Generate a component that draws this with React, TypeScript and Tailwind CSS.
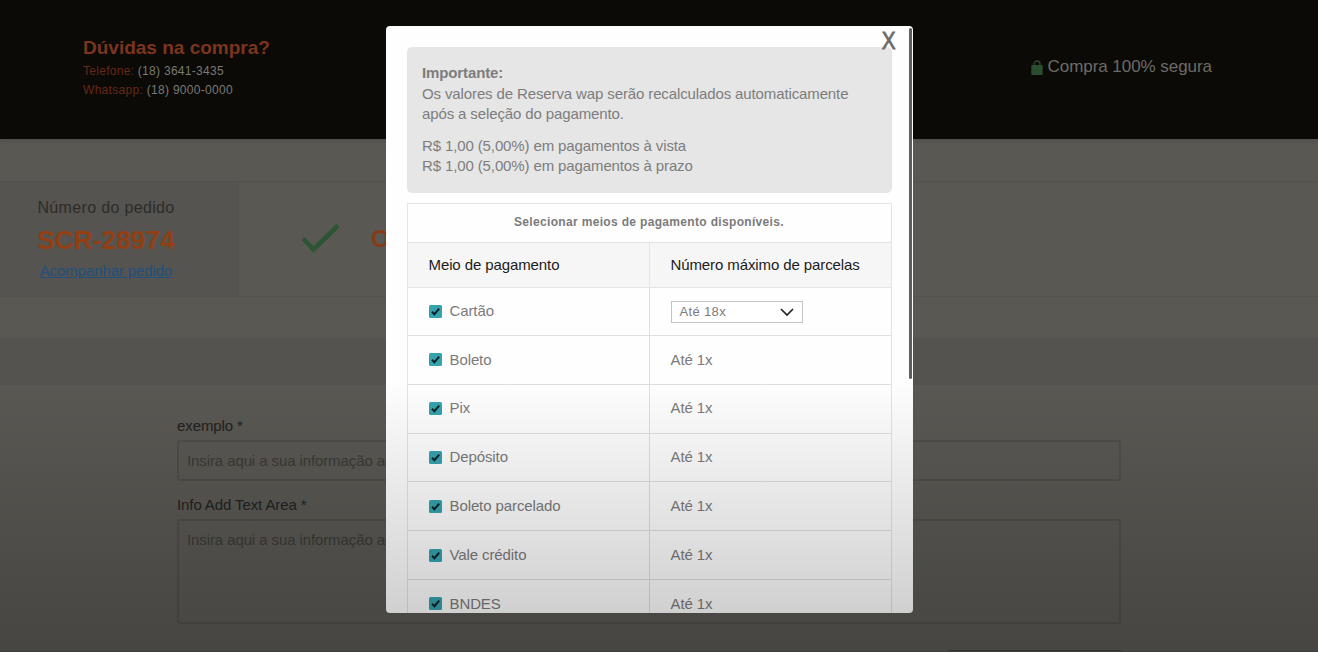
import React from 'react';

interface PaymentMethod {
  name: string;
  installments: string;
  select?: boolean;
}

const methods: PaymentMethod[] = [
  { name: 'Cartão', installments: 'Até 18x', select: true },
  { name: 'Boleto', installments: 'Até 1x' },
  { name: 'Pix', installments: 'Até 1x' },
  { name: 'Depósito', installments: 'Até 1x' },
  { name: 'Boleto parcelado', installments: 'Até 1x' },
  { name: 'Vale crédito', installments: 'Até 1x' },
  { name: 'BNDES', installments: 'Até 1x' },
];

const Header: React.FC = () => (
  <header className="flex h-[139px] shrink-0 justify-between bg-[#0b0a06] pl-[83px] pr-[106px] shadow-[0_1px_5px_rgba(0,0,0,0.15)]">
    <div className="pt-[34px]">
      <h1 className="text-[19px] leading-[27px] font-bold text-[#7c351c]">Dúvidas na compra?</h1>
      <p className="mt-px text-[12px] leading-[19px] tracking-[0.28px] text-[#7a7976]">
        <span className="text-[#632919]">Telefone:</span> (18) 3641-3435
      </p>
      <p className="text-[12px] leading-[19px] tracking-[0.3px] text-[#7a7976]">
        <span className="text-[#632919]">Whatsapp:</span> (18) 9000-0000
      </p>
    </div>
    <div className="flex h-6 items-center gap-[5px] mt-[55px] text-[17px] tracking-[-0.05px] text-[#6c6b68]">
      <svg className="h-[15px] w-[12px]" viewBox="0 0 12 15" fill="none">
        <path d="M3 6V4a3 3 0 0 1 6 0v2" stroke="#2a4d2e" strokeWidth="1.3" />
        <rect x="0.3" y="5" width="11.4" height="10" rx="1" fill="#2a4d2e" />
      </svg>
      <span>Compra 100% segura</span>
    </div>
  </header>
);

const OrderBar: React.FC = () => (
  <section className="flex h-[116px] border-y border-[#53524d] mt-[42px]">
    <div className="flex w-[239px] flex-col items-center bg-[#555450] pr-[27px] pt-[14px]">
      <span className="text-[16px] leading-6 tracking-[0.35px] text-[#2d2c29]">Número do pedido</span>
      <span className="text-[26px] leading-10 font-bold tracking-[0.2px] text-[#933f12]">SCR-28974</span>
      <a href="#" className="text-[15px] leading-[21px] tracking-[-0.1px] text-[#21507f] underline">
        Acompanhar pedido
      </a>
    </div>
    <div className="flex items-center pl-[62px]">
      <svg className="h-[32px] w-[40px]" viewBox="0 0 40 32" fill="none">
        <path d="M2 15.5 12.5 26.5 37 2.5" stroke="#2c5534" strokeWidth="4.6" />
      </svg>
      <span className="ml-[30px] text-[24px] font-bold text-[#873a17]">O</span>
    </div>
  </section>
);

const OrderForm: React.FC = () => (
  <section className="ml-[177px] w-[944px] pt-[31px] text-[15px] tracking-[-0.1px]">
    <label className="block h-[24px] leading-[20px] text-[#22211f]">exemplo *</label>
    <div className="h-[41px] rounded-[3px] border-2 border-[#4f4e49] pl-2 pt-[9px] leading-5 text-[#3b3a35]">
      Insira aqui a sua informação adicional
    </div>
    <label className="mt-[14px] block h-[24px] leading-5 text-[#22211f]">Info Add Text Area *</label>
    <div className="h-[105px] rounded-[3px] border-2 border-[#4f4e49] pl-2 pt-[9px] leading-5 text-[#3b3a35]">
      Insira aqui a sua informação adicional
    </div>
    <div className="ml-auto mt-[26px] h-10 w-[173px] bg-[#403e3e]" />
  </section>
);

const Checkbox: React.FC = () => (
  <svg className="h-[13px] w-[13px] shrink-0" viewBox="0 0 13 13" fill="none">
    <rect width="13" height="13" rx="1.5" fill="#35a3ae" />
    <path d="M3 6.8 5.4 9.2 10.2 3.6" stroke="#06202e" strokeWidth="2" />
  </svg>
);

const PaymentModal: React.FC = () => (
  <div className="absolute left-[385.5px] top-[26px] h-[586.5px] w-[527px] overflow-hidden rounded-[4px] bg-[#fefefe] pl-[21px] pr-[21px] pt-[21px]">
    <button className="absolute right-[16.5px] top-0 scale-x-90 text-[23px] leading-[30px] text-[#6b6b6b] [-webkit-text-stroke:0.8px_#6b6b6b]">X</button>
    <div className="absolute right-px top-[2px] h-[351px] w-[3px] rounded-sm bg-[#5e5e5d]" />

    <div className="h-[145.5px] rounded-[5px] bg-[#e6e6e6] px-[15.5px] pt-4 text-[15px] leading-[20.5px] tracking-[-0.12px] text-[#7d7d7d]">
      <strong className="block">Importante:</strong>
      <p>
        Os valores de Reserva wap serão recalculados automaticamente após a seleção do pagamento.
      </p>
      <p className="mt-[11px]">
        R$ 1,00 (5,00%) em pagamentos à vista
        <br />
        R$ 1,00 (5,00%) em pagamentos à prazo
      </p>
    </div>

    <div className="mt-[10.5px] border-x border-t border-[#e4e4e4] text-[15px] tracking-[-0.1px] text-[#7b7b7b]">
      <div className="h-[39px] border-b border-[#e4e4e4] text-center text-[12px] leading-[37px] font-bold tracking-[0.33px]">
        Selecionar meios de pagamento disponíveis.
      </div>
      <div className="grid h-[45px] grid-cols-[242.5px_1fr] border-b border-[#e4e4e4] bg-[#f6f6f6] leading-[44px] text-[#1c1c1c]">
        <div className="border-r border-[#e4e4e4] pl-[21px]">Meio de pagamento</div>
        <div className="pl-[20.5px]">Número máximo de parcelas</div>
      </div>
      {methods.map((method) => (
        <div
          key={method.name}
          className={`grid grid-cols-[242.5px_1fr] border-b border-[#dfdfdf] ${method.select ? 'h-[48px]' : 'h-[48.8px]'}`}
        >
          <div className="flex items-center border-r border-[#dfdfdf] pl-[21px]">
            <Checkbox />
            <span className="ml-[8px]">{method.name}</span>
          </div>
          <div className="flex items-center pl-[20.5px]">
            {method.select ? (
              <div className="flex h-[22px] w-[132px] items-center justify-between border border-[#c4c4c4] bg-white pl-2 pr-2 text-[13px] tracking-[0.35px]">
                {method.installments}
                <svg className="h-[8px] w-[14px]" viewBox="0 0 14 8" fill="none">
                  <path d="M1 1 7 7 13 1" stroke="#222" strokeWidth="1.7" />
                </svg>
              </div>
            ) : (
              <span>{method.installments}</span>
            )}
          </div>
        </div>
      ))}
    </div>
  </div>
);

const App: React.FC = () => (
  <div className="relative h-[652px] w-[1318px] overflow-hidden border-b border-[#423d3d] bg-[#595853] font-['Liberation_Sans',Arial,sans-serif]">
    <Header />
    <OrderBar />
    <div className="mt-[41px] h-[47px] bg-[#54534f]" />
    <OrderForm />
    <PaymentModal />
    {/* shade towards the bottom of the page */}
    <div className="pointer-events-none absolute inset-x-0 bottom-0 h-[272px] bg-linear-to-b from-black/0 to-black/21" />
  </div>
);

export default App;
